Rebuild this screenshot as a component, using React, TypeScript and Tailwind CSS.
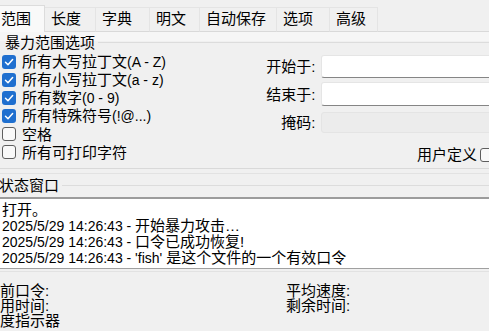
import React from "react";

function Check({ checked }: { checked: boolean }) {
  return checked ? (
    <span className="w-[14px] h-[14px] shrink-0 rounded-[3px] bg-[#1f6fcf] flex items-center justify-center">
      <svg width="14" height="14" viewBox="0 0 14 14">
        <polyline points="3.5,7.3 6,9.8 10.6,4.6" fill="none" stroke="#ffffff" strokeWidth="1.5" strokeLinecap="round" strokeLinejoin="round" />
      </svg>
    </span>
  ) : (
    <span className="w-[14px] h-[14px] shrink-0 rounded-[3px] bg-[#f9f9f9] border border-[#5e5e5e]" />
  );
}

const L = ({ children }: { children: React.ReactNode }) => <span className="text-[14px]">{children}</span>;

export default function App() {
  const tabs = [
    { t: "范围", w: "w-[48px]", sel: true },
    { t: "长度", w: "w-[51px]" },
    { t: "字典", w: "w-[54px]" },
    { t: "明文", w: "w-[50px]" },
    { t: "自动保存", w: "w-[77px]" },
    { t: "选项", w: "w-[53px]" },
    { t: "高级", w: "w-[48px]" },
  ];
  const checks: [React.ReactNode, boolean][] = [
    [<>所有大写拉丁文<L>(A - Z)</L></>, true],
    [<>所有小写拉丁文<L>(a - z)</L></>, true],
    [<>所有数字<L>(0 - 9)</L></>, true],
    [<>所有特殊符号<L>(!@...)</L></>, true],
    [<>空格</>, false],
    [<>所有可打印字符</>, false],
  ];
  return (
    <div className="w-[489px] h-[331px] overflow-hidden bg-[#f0f0f0] text-black text-[15px] leading-[17px] font-['Liberation_Sans','Noto_Sans_CJK_SC',sans-serif]">
      {/* tabs */}
      <div className="h-[32px] flex items-end ml-[-3px]">
        {tabs.map((tab) =>
          tab.sel ? (
            <div key={tab.t} className={`${tab.w} h-[27px] shrink-0 bg-[#f9f9f9] border border-b-0 border-[#dcdcdc] pl-[3px] pt-[4px] whitespace-nowrap`}>
              {tab.t}
            </div>
          ) : (
            <div key={tab.t} className={`${tab.w} h-[25px] shrink-0 bg-[#f0f0f0] border-t border-r border-[#e4e4e4] border-b border-b-[#d9d9d9] pl-[6px] pt-[2px] whitespace-nowrap`}>
              {tab.t}
            </div>
          )
        )}
        <div className="flex-1 h-px bg-[#d9d9d9]" />
      </div>

      {/* panel */}
      <div className="h-[137px] border-b border-[#d9d9d9] overflow-hidden">
        <div className="h-[20px] flex items-center bg-[linear-gradient(#f6f6f6_0,#f6f6f6_9px,#f0f0f0_9px)]">
          <span className="pl-[5px] whitespace-nowrap">暴力范围选项</span>
          <div className="flex-1 h-px bg-[#dcdcdc] ml-[3px]" />
        </div>
        <div className="flex">
          <div className="w-[250px] shrink-0 pt-[1px] flex flex-col">
            {checks.map(([label, c], i) => (
              <div key={i} className="h-[18px] flex items-center">
                <span className="ml-[2px] flex"><Check checked={c} /></span>
                <span className="ml-[6px] whitespace-nowrap">{label}</span>
              </div>
            ))}
          </div>
          <div className="w-[260px] shrink-0 pt-[3px] flex flex-col">
            <div className="h-[23px] flex items-center">
              <span className="w-[66px] text-right whitespace-nowrap">开始于:</span>
              <div className="ml-[6px] w-[190px] h-full bg-white border border-[#e5e5e5] border-b-[#858585] rounded-[3px]" />
            </div>
            <div className="h-[24px] mt-[4px] flex items-center">
              <span className="w-[66px] text-right whitespace-nowrap">结束于:</span>
              <div className="ml-[6px] w-[190px] h-full bg-white border border-[#e5e5e5] border-b-[#858585] rounded-[3px]" />
            </div>
            <div className="h-[21px] mt-[6px] flex items-center">
              <span className="w-[66px] text-right whitespace-nowrap">掩码:</span>
              <div className="ml-[6px] w-[190px] h-full bg-[#ececec] border border-[#e4e4e4] rounded-[3px]" />
            </div>
            <div className="h-[17px] mt-[13px] flex items-center pl-[167px]">
              <span className="whitespace-nowrap">用户定义</span>
              <span className="ml-[3px] flex"><Check checked={false} /></span>
            </div>
          </div>
        </div>
      </div>
      <div className="h-[5px] border-b border-[#e2e2e2]" />

      {/* status */}
      <div className="h-[23px] flex items-center">
        <span className="ml-[-1px] whitespace-nowrap">状态窗口</span>
        <div className="flex-1 h-px bg-[#dcdcdc] ml-[3px]" />
      </div>
      <div className="h-[72px] bg-white border-t-2 border-t-[#9c9c9c] border-b border-b-[#a0a0a0] pt-[3px] pl-[2px] leading-[16px] whitespace-nowrap overflow-hidden">
        <div>打开。</div>
        <div><L>2025/5/29 14:26:43 - </L>开始暴力攻击…</div>
        <div><L>2025/5/29 14:26:43 - </L>口令已成功恢复!</div>
        <div><L>2025/5/29 14:26:43 - 'fish' </L>是这个文件的一个有效口令</div>
      </div>
      <div className="h-[3px] border-b border-[#e2e2e2]" />

      {/* bottom info */}
      <div className="flex pt-[11px] leading-[15px]">
        <div className="w-[301px] shrink-0 ml-[-15px] flex flex-col whitespace-nowrap">
          <div>当前口令:</div>
          <div>已用时间:</div>
          <div>进度指示器</div>
        </div>
        <div className="flex flex-col whitespace-nowrap">
          <div>平均速度:</div>
          <div>剩余时间:</div>
        </div>
      </div>
    </div>
  );
}
